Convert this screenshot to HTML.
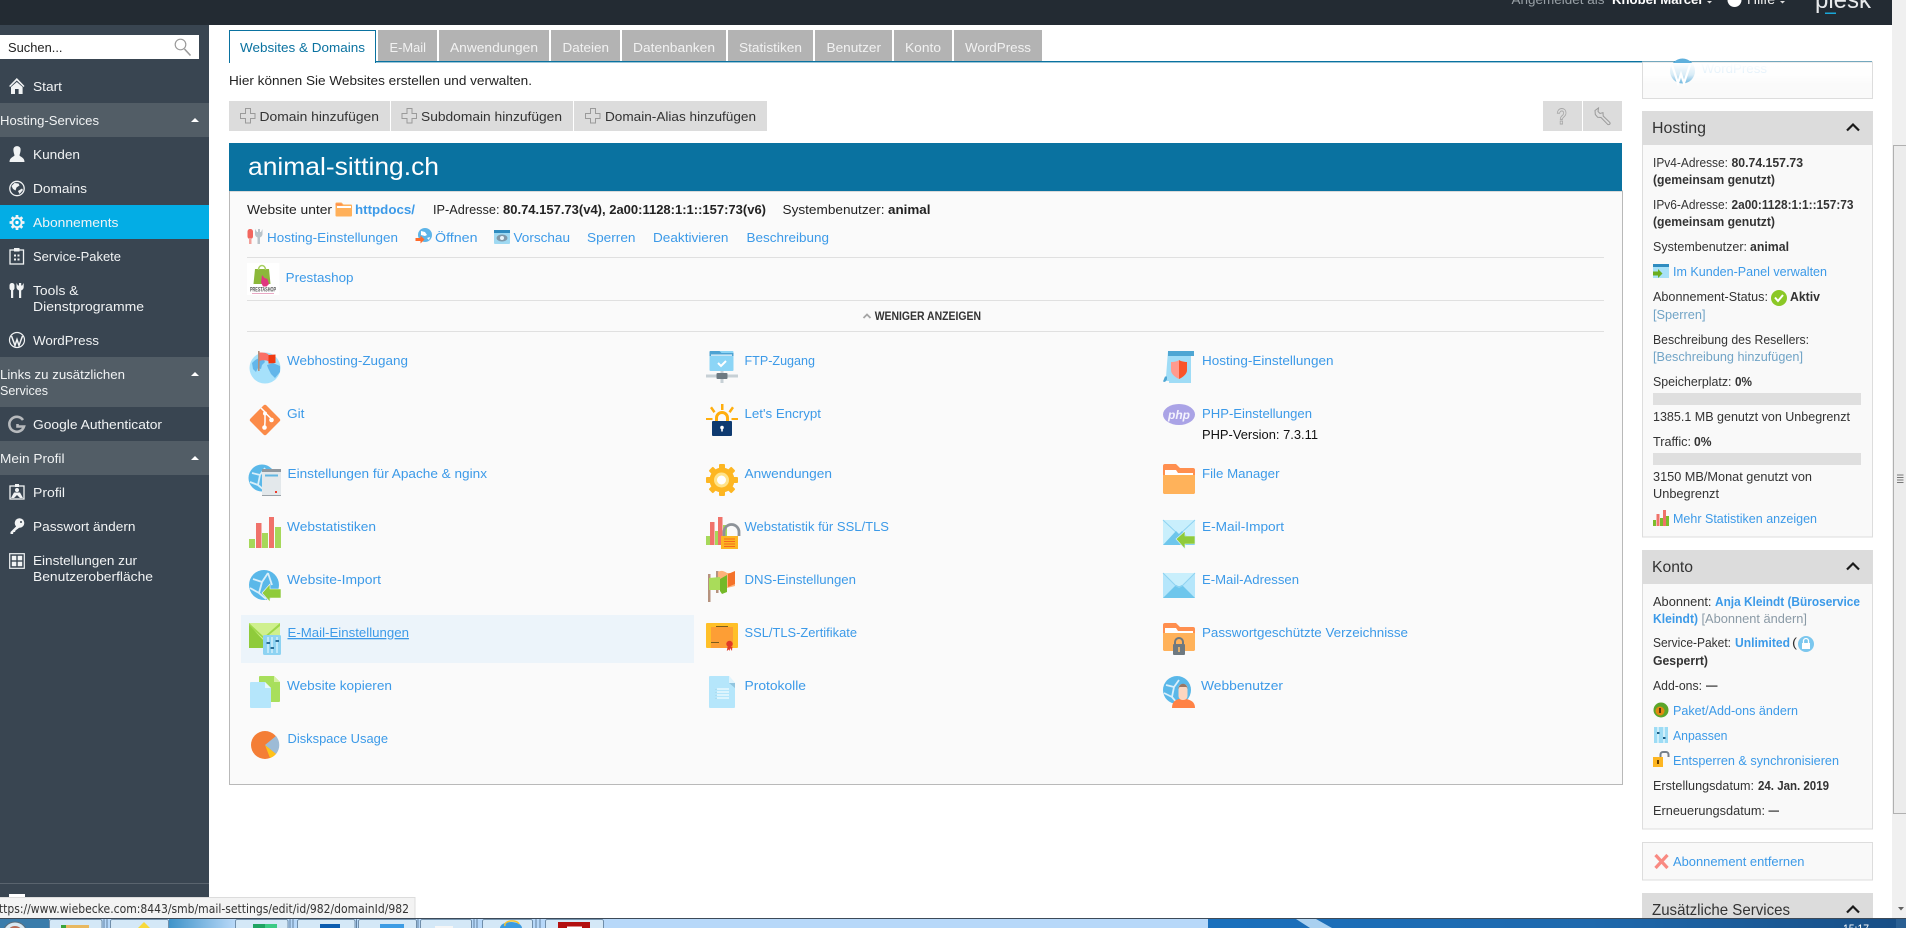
<!DOCTYPE html>
<html lang="de"><head><meta charset="utf-8"><title>Plesk - animal-sitting.ch</title>
<style>
html,body{margin:0;padding:0;width:1906px;height:928px;overflow:hidden;background:#fff}
svg{display:block;position:absolute;left:0;top:0}
text{font-family:"Liberation Sans",sans-serif;font-size:13px;fill:#222;white-space:pre}
.s text,text.s{fill:#f1f3f4}
.l text,text.l{fill:#3c9ae8}
.b{font-weight:bold}
.g{fill:#71a4c6}
.tab text{fill:#f2f2f2}
.h{font-size:16px;fill:#333}
.d{fill:#333}
</style></head><body>
<svg width="1906" height="928" viewBox="0 0 1906 928" xmlns="http://www.w3.org/2000/svg">
<defs>
<linearGradient id="fade" x1="0" y1="0" x2="0" y2="1"><stop offset="0" stop-color="#fff"/><stop offset="0.55" stop-color="#fff" stop-opacity=".75"/><stop offset="1" stop-color="#fff" stop-opacity="0"/></linearGradient>
<linearGradient id="tb" x1="0" y1="0" x2="1" y2="0"><stop offset="0" stop-color="#1a70bd"/><stop offset="0.55" stop-color="#1f69ad"/><stop offset="1" stop-color="#174d84"/></linearGradient>
<linearGradient id="tb2" x1="0" y1="0" x2="1" y2="0"><stop offset="0" stop-color="#3f93c9"/><stop offset="1" stop-color="#b9d9f8"/></linearGradient>
</defs>
<rect width="1906" height="928" fill="#fff"/>

<!-- main column -->
<g>
<rect x="229.5" y="30.5" width="146" height="32" fill="#fff" stroke="#0a72a0"/>
<rect x="376" y="61" width="1496" height="1.4" fill="#0a72a0"/>
<rect x="230" y="60" width="145" height="3" fill="#fff"/>
<rect x="378" y="30" width="59" height="31" fill="#b3b3b3"/><rect x="439" y="30" width="110" height="31" fill="#b3b3b3"/><rect x="551" y="30" width="69" height="31" fill="#b3b3b3"/><rect x="622" y="30" width="104" height="31" fill="#b3b3b3"/><rect x="728" y="30" width="85" height="31" fill="#b3b3b3"/><rect x="815" y="30" width="77" height="31" fill="#b3b3b3"/><rect x="894" y="30" width="58" height="31" fill="#b3b3b3"/><rect x="954" y="30" width="88" height="31" fill="#b3b3b3"/>
<text x="240" y="52" textLength="125" lengthAdjust="spacingAndGlyphs" fill="#0a72a0" style="fill:#0a72a0">Websites &amp; Domains</text>
<g class="tab">
<text x="389.5" y="52" textLength="36.5" lengthAdjust="spacingAndGlyphs">E-Mail</text>
<text x="450" y="52" textLength="88" lengthAdjust="spacingAndGlyphs">Anwendungen</text>
<text x="562.5" y="52" textLength="46.5" lengthAdjust="spacingAndGlyphs">Dateien</text>
<text x="633" y="52" textLength="82" lengthAdjust="spacingAndGlyphs">Datenbanken</text>
<text x="739" y="52" textLength="63" lengthAdjust="spacingAndGlyphs">Statistiken</text>
<text x="826.5" y="52" textLength="54.5" lengthAdjust="spacingAndGlyphs">Benutzer</text>
<text x="905" y="52" textLength="36" lengthAdjust="spacingAndGlyphs">Konto</text>
<text x="965" y="52" textLength="66" lengthAdjust="spacingAndGlyphs">WordPress</text>
</g>
<text x="229" y="85" textLength="303" lengthAdjust="spacingAndGlyphs">Hier können Sie Websites erstellen und verwalten.</text>

<rect x="229" y="101" width="161" height="30" fill="#dcdcdc"/><rect x="391" y="101" width="182" height="30" fill="#dcdcdc"/><rect x="574" y="101" width="193" height="30" fill="#dcdcdc"/>
<g fill="none" stroke="#9a9a9a" stroke-width="1">
<path d="M245.5 108.5h5v5h4.500v5h-4.500v4.500h-5v-4.500h-5v-5h5z"/>
<path d="M407 108.500h5v5h4.500v5h-4.500v4.500h-5v-4.500h-5v-5h5z"/>
<path d="M590.500 108.500h5v5h4.500v5h-4.500v4.500h-5v-4.500h-5v-5h5z"/>
</g>
<text x="259.500" y="121" textLength="119.500" lengthAdjust="spacingAndGlyphs" class="d">Domain hinzufügen</text>
<text x="421" y="121" textLength="141" lengthAdjust="spacingAndGlyphs" class="d">Subdomain hinzufügen</text>
<text x="605" y="121" textLength="151" lengthAdjust="spacingAndGlyphs" class="d">Domain-Alias hinzufügen</text>
<rect x="1543" y="101" width="39" height="30" fill="#dcdcdc"/><rect x="1583" y="101" width="39" height="30" fill="#dcdcdc"/>
<text x="1556.500" y="124" textLength="10.500" lengthAdjust="spacingAndGlyphs" style="font-size:22px;font-weight:bold;fill:#dcdcdc;stroke:#a5a5a5;stroke-width:.9">?</text>
<path d="M1595 110.500l3.500-2.500-.5 3.500 2 2 3-.8 .2 3.300 6.600 6.400c1 1.400 -.8 2.900 -2.200 1.900l-6.600-6.800-3.300-.2-2.400-2.800z" fill="none" stroke="#9a9a9a" stroke-width="1"/>

<rect x="229.500" y="191" width="1393" height="593.500" fill="#fafafa" stroke="#b9b9b9"/>
<rect x="229" y="143" width="1393" height="48" fill="#0a72a0"/>
<text x="248" y="175" textLength="191" lengthAdjust="spacingAndGlyphs" style="font-size:25px;fill:#fff">animal-sitting.ch</text>

<text x="247" y="214" textLength="85" lengthAdjust="spacingAndGlyphs">Website unter</text>
<path d="M335.500 203.500a1 1 0 0 1 1-1h5l2 2h7.500a1 1 0 0 1 1 1v10a1 1 0 0 1-1 1h-14.500a1 1 0 0 1-1-1z" fill="#ffb05a"/><path d="M337 206h14v2h-14z" fill="#fff"/><path d="M335.500 203.500h5.500l2 2h-7.500z" fill="#ff8f4a"/>
<text x="355" y="214" textLength="60" lengthAdjust="spacingAndGlyphs" class="l b" style="fill:#3c9ae8">httpdocs/</text>
<text x="433" y="214" textLength="66.500" lengthAdjust="spacingAndGlyphs">IP-Adresse:</text>
<text x="503" y="214" textLength="263" lengthAdjust="spacingAndGlyphs" class="b">80.74.157.73(v4), 2a00:1128:1:1::157:73(v6)</text>
<text x="782.500" y="214" textLength="102" lengthAdjust="spacingAndGlyphs">Systembenutzer:</text>
<text x="888" y="214" textLength="42.500" lengthAdjust="spacingAndGlyphs" class="b">animal</text>

<g class="l">
<text x="267" y="242" textLength="131" lengthAdjust="spacingAndGlyphs">Hosting-Einstellungen</text>
<text x="435" y="242" textLength="42.500" lengthAdjust="spacingAndGlyphs">Öffnen</text>
<text x="513.500" y="242" textLength="56.500" lengthAdjust="spacingAndGlyphs">Vorschau</text>
<text x="587" y="242" textLength="48.500" lengthAdjust="spacingAndGlyphs">Sperren</text>
<text x="653" y="242" textLength="75.500" lengthAdjust="spacingAndGlyphs">Deaktivieren</text>
<text x="746.500" y="242" textLength="82.500" lengthAdjust="spacingAndGlyphs">Beschreibung</text>
<text x="285.700" y="282" textLength="67.800" lengthAdjust="spacingAndGlyphs">Prestashop</text>
</g>
<!-- hosting tools icon -->
<rect x="247.500" y="229" width="5.500" height="10" rx="2.500" fill="#f2665e"/><rect x="249" y="238" width="2.500" height="6" fill="#f2a09a"/>
<path d="M255 229v5c0 2 1.500 3 2.500 3.500v6.500h2.500v-6.500c1-.5 2.500-1.500 2.500-3.500v-5l-1.500 3h-1v-3h-2v3h-1z" fill="#b9c3c9"/>
<!-- open icon -->
<circle cx="425" cy="235" r="7" fill="#5eb4e8"/><path d="M421 231l4 1 2 3-2 1-4-1zM427 238l3-1-1 3z" fill="#fff"/><path d="M415.500 238h5v-2.500l4 4-4 4v-2.500h-5z" fill="#ff6a2a"/>
<!-- preview icon -->
<rect x="494" y="230" width="16" height="14" rx="1" fill="#9fd9f2"/><rect x="494" y="230" width="16" height="3" fill="#2f8cc0"/><ellipse cx="502" cy="238" rx="5.500" ry="3.500" fill="#7f98a8"/><circle cx="502" cy="238" r="2" fill="#e8f4fa"/>
<line x1="247" y1="257.500" x2="1604" y2="257.500" stroke="#e0e0e0"/>
<!-- prestashop -->
<rect x="247" y="263" width="32.500" height="32" fill="#fff"/>
<path d="M255 269h14l1.500 15h-17z" fill="#8cb83a"/><path d="M258.500 270c0-6 7-6 7 0" fill="none" stroke="#a8d060" stroke-width="1.500"/><path d="M262 275l2.500 3 3 1 1.500 5-2.500 2.500h-3.500l-2-4z" fill="#e0377f"/>
<text x="250" y="291.500" textLength="26" lengthAdjust="spacingAndGlyphs" class="b" style="font-size:6px;fill:#555">PRESTASHOP</text>
<rect x="252" y="293" width="22" height="1" fill="#e9a8c4"/>
<line x1="247" y1="300.500" x2="1604" y2="300.500" stroke="#e0e0e0"/>
<path d="M863.500 318l3.500-3.500 3.500 3.500" fill="none" stroke="#a5a5a5" stroke-width="1.800"/>
<text x="874.700" y="320" textLength="106.300" lengthAdjust="spacingAndGlyphs" class="b" style="font-size:11.500px;fill:#333">WENIGER ANZEIGEN</text>
<line x1="247" y1="331.500" x2="1604" y2="331.500" stroke="#e0e0e0"/>

<rect x="241" y="615" width="453" height="48" fill="#ecf4fa"/>

<g class="l">
<text x="287" y="365" textLength="121" lengthAdjust="spacingAndGlyphs">Webhosting-Zugang</text>
<text x="287" y="418" textLength="17.500" lengthAdjust="spacingAndGlyphs">Git</text>
<text x="287.500" y="478" textLength="199.500" lengthAdjust="spacingAndGlyphs">Einstellungen für Apache &amp; nginx</text>
<text x="287" y="531" textLength="89" lengthAdjust="spacingAndGlyphs">Webstatistiken</text>
<text x="287" y="584" textLength="94" lengthAdjust="spacingAndGlyphs">Website-Import</text>
<text x="287.500" y="637" textLength="121.500" lengthAdjust="spacingAndGlyphs" text-decoration="underline">E-Mail-Einstellungen</text>
<text x="287" y="690" textLength="105" lengthAdjust="spacingAndGlyphs">Website kopieren</text>
<text x="287.500" y="743" textLength="100.500" lengthAdjust="spacingAndGlyphs">Diskspace Usage</text>

<text x="744.500" y="365" textLength="70.500" lengthAdjust="spacingAndGlyphs">FTP-Zugang</text>
<text x="744.500" y="418" textLength="76.500" lengthAdjust="spacingAndGlyphs">Let's Encrypt</text>
<text x="744.500" y="478" textLength="87.500" lengthAdjust="spacingAndGlyphs">Anwendungen</text>
<text x="744.500" y="531" textLength="144.500" lengthAdjust="spacingAndGlyphs">Webstatistik für SSL/TLS</text>
<text x="744.500" y="584" textLength="111.500" lengthAdjust="spacingAndGlyphs">DNS-Einstellungen</text>
<text x="744.500" y="637" textLength="112.500" lengthAdjust="spacingAndGlyphs">SSL/TLS-Zertifikate</text>
<text x="744.500" y="690" textLength="61.500" lengthAdjust="spacingAndGlyphs">Protokolle</text>

<text x="1202" y="365" textLength="131.500" lengthAdjust="spacingAndGlyphs">Hosting-Einstellungen</text>
<text x="1202" y="418" textLength="110" lengthAdjust="spacingAndGlyphs">PHP-Einstellungen</text>
<text x="1202" y="478" textLength="77.500" lengthAdjust="spacingAndGlyphs">File Manager</text>
<text x="1202" y="531" textLength="82" lengthAdjust="spacingAndGlyphs">E-Mail-Import</text>
<text x="1202" y="584" textLength="97" lengthAdjust="spacingAndGlyphs">E-Mail-Adressen</text>
<text x="1202" y="637" textLength="206" lengthAdjust="spacingAndGlyphs">Passwortgeschützte Verzeichnisse</text>
<text x="1201" y="690" textLength="82" lengthAdjust="spacingAndGlyphs">Webbenutzer</text>
</g>
<text x="1202" y="439" textLength="116" lengthAdjust="spacingAndGlyphs" style="fill:#111">PHP-Version: 7.3.11</text>

<!-- Webhosting-Zugang -->
<g transform="translate(249,351)">
<circle cx="16" cy="17" r="15.500" fill="#a6e1fb"/>
<path d="M3 12c3-3 7-6 11-5l2 4-3 3-1 4-3-1-2 4-3-3zM18 14l6-2 7 3 0 6-5 6-4-4-3-6z" fill="#63b6ea"/>
<rect x="9" y="0" width="1.600" height="20" fill="#b3907c"/>
<path d="M10.500 1.500c3 0 7 0 9 2v7c-2-1.500-6-1.500-9-.5z" fill="#fa6f66"/><path d="M19.500 4l7-.5v8.500l-7 .5z" fill="#f03a12"/>
</g>
<!-- Git -->
<g transform="translate(249,404)">
<rect x="4.700" y="4.700" width="22.600" height="22.600" rx="2" fill="#fb8b49" transform="rotate(45 16 16)"/>
<path d="M12 4l4 4M16 8.500v9l-.5 8M16 8.500l7 7" stroke="#fff" stroke-width="1.500" fill="none"/>
<circle cx="16" cy="9.500" r="2" fill="#fff"/><circle cx="15.500" cy="23.500" r="2.300" fill="#fff"/><circle cx="22.500" cy="16" r="2.300" fill="#fff"/>
</g>
<!-- Apache -->
<g transform="translate(249,464)">
<circle cx="13" cy="14" r="13.500" fill="#5ab8e9"/><path d="M3 9l8 2 5-7M11 11l-2 10 6 5M1 18l8 3" stroke="#d9effa" stroke-width="1.800" fill="none"/>
<rect x="13" y="5" width="19" height="27" fill="#e3e8eb"/><path d="M13 5h19v3h-19z" fill="#90989f"/><rect x="16" y="10.500" width="13" height="2" fill="#62b6e2"/><rect x="26" y="27" width="2" height="2" fill="#ee3c2b"/><rect x="13" y="31" width="19" height="1" fill="#9aa2a8"/>
</g>
<!-- Webstatistiken -->
<g transform="translate(249,517)">
<rect x="0" y="22" width="6" height="9" fill="#a6d85a"/><rect x="7" y="6" width="5.500" height="25" fill="#f0726a"/><rect x="13" y="16" width="6" height="15" fill="#a6d85a"/><rect x="20" y="0" width="5" height="31" fill="#f0726a"/><rect x="26" y="10" width="6" height="21" fill="#a6d85a"/>
</g>
<!-- Website-Import -->
<g transform="translate(249,570)">
<circle cx="15" cy="15" r="15" fill="#5ab8e9"/><path d="M4 9l9 3 6-9M13 12l-3 11 7 6M1 18l9 5M19 3l4 12" stroke="#d9effa" stroke-width="1.800" fill="none"/>
<path d="M13 23l8-9v5h11v9h-11v4z" fill="#8fcb3b" stroke="#f9f9f9" stroke-width=".6"/>
</g>
<!-- E-Mail-Einstellungen -->
<g transform="translate(249,623)">
<rect x="0" y="0" width="31" height="25" fill="#cff08e"/><path d="M0 0l15 14 16-14v3l-16 13-15-13z" fill="#9ed84a"/><path d="M0 2v23h14l3-5z" fill="#8fcb3b"/>
<rect x="14" y="12" width="18" height="20" rx="1.500" fill="#8ed3f2"/><path d="M19 14v16M23 14v16M28 14v16" stroke="#d2f0fb" stroke-width="1.500"/><rect x="17.500" y="19" width="3.500" height="2" fill="#2a6f98"/><rect x="21.500" y="24" width="3.500" height="2" fill="#2a6f98"/><rect x="26.500" y="17" width="3.500" height="2" fill="#2a6f98"/>
</g>
<!-- Website kopieren -->
<g transform="translate(250,676)">
<path d="M9 1a1 1 0 0 1 1-1h14l6 6v19a1 1 0 0 1-1 1h-20z" fill="#a8df5c"/><path d="M24 0l6 6h-6z" fill="#d7f0a8"/>
<path d="M0 7a1 1 0 0 1 1-1h14l6 6v19a1 1 0 0 1-1 1h-19a1 1 0 0 1-1-1z" fill="#b5e6fb"/><path d="M15 6l6 6h-6z" fill="#e7f7fe"/>
</g>
<!-- Diskspace -->
<g transform="translate(251,731)">
<circle cx="14" cy="14" r="14" fill="#f47e36"/><path d="M14 14l11-9a14 14 0 0 1 0 18z" fill="#9dbbd6"/><path d="M14 14l11 9a14 14 0 0 1-6 4z" fill="#ffc21a"/>
</g>

<!-- FTP -->
<g transform="translate(706,351)">
<rect x="3.500" y="0" width="24" height="20" rx="1" fill="#8cd5f6"/><path d="M3.500 1a1 1 0 0 1 1-1h9l2 2h12v3h-24z" fill="#4ea3d3"/><rect x="5" y="3.500" width="21" height="1.300" fill="#e9f7fd"/><path d="M12 12l3 3 5-5" stroke="#fff" stroke-width="2" fill="none"/>
<rect x="0" y="23.500" width="32" height="3" fill="#c7d0d5"/><rect x="14.500" y="20" width="3" height="12" fill="#c7d0d5"/><rect x="10.500" y="22" width="11" height="6" rx="1" fill="#6d7a82"/>
</g>
<!-- Let's Encrypt -->
<g transform="translate(706,404)">
<path d="M15 0h2.500v6h-2.500zM4 4l2-1.500 3.500 5-2 1.500zM28 4l-2-1.500-3.500 5 2 1.500zM0 14h6.500v2h-6.500zM25.500 14h6.500v2h-6.500z" fill="#ffae0d"/>
<path d="M9 17v-3a7 7 0 0 1 14 0v3h-3v-3a4 4 0 0 0-8 0v3z" fill="#ffae0d"/>
<rect x="6" y="17" width="20" height="15" rx="1" fill="#0e3a70"/><circle cx="16" cy="23.500" r="1.800" fill="#fff"/><rect x="15.200" y="24" width="1.600" height="3.500" fill="#fff"/>
</g>
<!-- Anwendungen gear -->
<g transform="translate(706,464)">
<g fill="#fdb622"><circle cx="16" cy="16" r="12.500"/><rect x="13" y="0" width="6" height="32" rx="1"/><rect x="13" y="0" width="6" height="32" rx="1" transform="rotate(45 16 16)"/><rect x="13" y="0" width="6" height="32" rx="1" transform="rotate(90 16 16)"/><rect x="13" y="0" width="6" height="32" rx="1" transform="rotate(135 16 16)"/></g>
<circle cx="15.500" cy="16" r="7.500" fill="#ffe38a"/><circle cx="15.500" cy="16" r="4.500" fill="#fff"/>
</g>
<!-- Webstatistik SSL -->
<g transform="translate(706,517)">
<rect x="0" y="19" width="6" height="9" fill="#a6d85a"/><rect x="4" y="5" width="4.500" height="23" fill="#f0726a"/><rect x="9" y="14" width="4" height="14" fill="#a6d85a"/><rect x="12" y="0" width="4.500" height="28" fill="#f0726a"/><rect x="17" y="8" width="4" height="20" fill="#a6d85a"/>
<path d="M18 19v-4a7.500 7.500 0 0 1 15 0v4" fill="none" stroke="#8d9399" stroke-width="2.800"/>
<rect x="15" y="19" width="17" height="13" fill="#fdb622"/><path d="M18 22h11M18 24.500h11M18 27h11M18 29.500h11" stroke="#f56a1e" stroke-width="1"/>
</g>
<!-- DNS -->
<g transform="translate(706,570)">
<rect x="2" y="4" width="2.500" height="28" fill="#b5927e"/><rect x="10" y="1" width="2.500" height="22" fill="#b5927e"/>
<path d="M12 2c3-2 6-1 9 1l8 0v13l-8 2-9-6z" fill="#ffb27a"/><path d="M22 4l7-3v13l-7 3z" fill="#f4722a"/>
<path d="M3 8l11-1 0 13-11 0z" fill="#a9dc5a"/><path d="M14 9l7-4v17l-5 2-2-3z" fill="#74b928"/>
</g>
<!-- SSL cert -->
<g transform="translate(706,623)">
<rect x="0" y="0" width="32" height="25" rx="1" fill="#ffc028"/><path d="M5 4h22v21h-22z" fill="#fd9e35"/><path d="M5 0h22v3h-22z" fill="#ffc028"/><rect x="10" y="3" width="12" height="1" fill="#7a5c1c"/><rect x="5" y="19" width="8" height="1" fill="#7a5c1c"/>
<circle cx="23.500" cy="21" r="3.200" fill="#e03a28"/><path d="M21.500 24l-.7 4 2-1.500 1 1.500.2-3 2 3 .3-4z" fill="#e03a28"/>
</g>
<!-- Protokolle -->
<g transform="translate(709,676)">
<path d="M0 1a1 1 0 0 1 1-1h19l6 7v24a1 1 0 0 1-1 1h-24a1 1 0 0 1-1-1z" fill="#b5e6fb"/><path d="M20 0l6 7h-6z" fill="#dff4fd"/><path d="M20 7h6v5z" fill="#92c5df"/>
<path d="M8 13h12M8 16h12M8 19h12M8 22h12" stroke="#e9f8fe" stroke-width="1.600"/><path d="M7 13v.1M7 16v.1M7 19v.1M7 22v.1" stroke="#5d7a8c" stroke-width="1.500"/>
</g>
<!-- Hosting-Einstellungen col 3 -->
<g transform="translate(1163,351)">
<path d="M5 0h26v4h-3v28h-22v-2h-6c1-.5 3-2 3-4z" fill="#9fdcf6"/><rect x="5" y="0" width="26" height="5" fill="#4ea6d3"/><path d="M2 31l-2-.5 2-5h2v3z" fill="#4ea6d3"/>
<path d="M8 11c4 0 7-1 8-2 1 1 5 2 8 2v8c0 4-4 7-8 9-4-2-8-5-8-9z" fill="#ff9a8e"/><path d="M16 9c1 1 5 2 8 2v8c0 4-4 7-8 9z" fill="#f9542a"/>
</g>
<!-- PHP -->
<g transform="translate(1163,404)">
<ellipse cx="16" cy="10.500" rx="16" ry="10.500" fill="#aaa3e6"/>
<text x="5" y="15" textLength="22" lengthAdjust="spacingAndGlyphs" style="font-size:12px;font-weight:bold;font-style:italic;fill:#f4f3fd">php</text>
</g>
<!-- File manager -->
<g transform="translate(1163,464)">
<path d="M0 2a2 2 0 0 1 2-2h11l4 4h13a2 2 0 0 1 2 2v22a2 2 0 0 1-2 2h-28a2 2 0 0 1-2-2z" fill="#ff8f4f"/><path d="M0 11h32v17a2 2 0 0 1-2 2h-28a2 2 0 0 1-2-2z" fill="#ffb25a"/><path d="M2 6h11l2 3h15v2h-28z" fill="#fff"/>
</g>
<!-- E-Mail import -->
<g transform="translate(1163,517)">
<rect x="0" y="3" width="32" height="25" fill="#c9effc"/><path d="M0 3l16 15 16-15" fill="none" stroke="#8ed3f2" stroke-width="1"/><path d="M0 28l13-14 3 3 3-3 13 14z" fill="#6ec6ec"/>
<path d="M13 22l9-8v5h10v8h-10v5z" fill="#8fcb3b" stroke="#dff4fd" stroke-width=".6"/>
</g>
<!-- E-Mail addresses -->
<g transform="translate(1163,570)">
<rect x="0" y="3" width="32" height="25" fill="#c9effc"/><path d="M0 3l13 13h6l13-13v25h-32z" fill="#b5e6fb"/><path d="M0 28l13-13 3 1.500 3-1.500 13 13z" fill="#6ec6ec"/><path d="M0 3l13 13 3 1.500 3-1.500 13-13" fill="none" stroke="#8ed3f2"/>
</g>
<!-- Protected dirs -->
<g transform="translate(1163,623)">
<path d="M0 2a2 2 0 0 1 2-2h11l4 4h13a2 2 0 0 1 2 2v20a2 2 0 0 1-2 2h-28a2 2 0 0 1-2-2z" fill="#ff8f4f"/><path d="M0 10h32v16a2 2 0 0 1-2 2h-28a2 2 0 0 1-2-2z" fill="#ffb25a"/><path d="M2 5h11l2 3h15v2h-28z" fill="#fff"/>
<path d="M12 22v-3a4 4 0 0 1 8 0v3" fill="none" stroke="#6e7980" stroke-width="2"/><rect x="10" y="21" width="12" height="11" rx="1" fill="#6e7980"/><rect x="15" y="24" width="2" height="5" fill="#ddb070"/>
</g>
<!-- Webbenutzer -->
<g transform="translate(1163,676)">
<circle cx="14" cy="14" r="14" fill="#5ab8e9"/><path d="M3 9l8 2 5-7M11 11l-2 10 5 6M1 17l8 4" stroke="#d9effa" stroke-width="1.800" fill="none"/>
<path d="M9 32c0-6 3-8 7-9h7c5 1 9 3 9 9z" fill="#ff8245"/>
<rect x="15.500" y="8" width="9" height="16" rx="4" fill="#fcd6c0"/><path d="M15.500 13c0-7 9-7 9 0l-1-2h-7z" fill="#9a7663"/>
</g>

<!-- right column -->
<rect x="1642.500" y="62" width="230" height="36.500" fill="#fafafa" stroke="#ddd"/>
<g transform="translate(1670,63)"><circle cx="12.500" cy="8" r="12.500" fill="#5fb0dc"/><path d="M2 2l6 18 3-9 3 9 6-18" fill="none" stroke="#fff" stroke-width="2.200"/></g>
<text x="1701.500" y="73" textLength="65.500" lengthAdjust="spacingAndGlyphs" style="fill:#7cbce8">WordPress</text>
<rect x="1643" y="63" width="229" height="22" fill="url(#fade)"/>

<rect x="1642.500" y="111.500" width="230" height="425.500" fill="#f9f9f9" stroke="#ddd"/>
<rect x="1642" y="111" width="231" height="34" fill="#dcdcdc"/>
<text x="1652" y="133" textLength="54" lengthAdjust="spacingAndGlyphs" class="h">Hosting</text>
<path d="M1847 130.500l6-6 6 6" fill="none" stroke="#1a1a1a" stroke-width="2.200"/>
<g class="d">
<text x="1653" y="167" textLength="75" lengthAdjust="spacingAndGlyphs" class="d">IPv4-Adresse:</text><text x="1731.500" y="167" textLength="71.500" lengthAdjust="spacingAndGlyphs" class="d b">80.74.157.73</text>
<text x="1653" y="184" textLength="122" lengthAdjust="spacingAndGlyphs" class="d b">(gemeinsam genutzt)</text>
<text x="1653" y="209" textLength="75" lengthAdjust="spacingAndGlyphs" class="d">IPv6-Adresse:</text><text x="1731.500" y="209" textLength="122" lengthAdjust="spacingAndGlyphs" class="d b">2a00:1128:1:1::157:73</text>
<text x="1653" y="226" textLength="122" lengthAdjust="spacingAndGlyphs" class="d b">(gemeinsam genutzt)</text>
<text x="1653" y="251" textLength="94" lengthAdjust="spacingAndGlyphs" class="d">Systembenutzer:</text><text x="1750" y="251" textLength="39" lengthAdjust="spacingAndGlyphs" class="d b">animal</text>
<text x="1653" y="301" textLength="115" lengthAdjust="spacingAndGlyphs" class="d">Abonnement-Status:</text><text x="1790" y="301" textLength="30" lengthAdjust="spacingAndGlyphs" class="d b">Aktiv</text>
<text x="1653" y="344" textLength="156" lengthAdjust="spacingAndGlyphs" class="d">Beschreibung des Resellers:</text>
<text x="1653" y="386" textLength="78.500" lengthAdjust="spacingAndGlyphs" class="d">Speicherplatz:</text><text x="1735" y="386" textLength="17" lengthAdjust="spacingAndGlyphs" class="d b">0%</text>
<text x="1653" y="421" textLength="197" lengthAdjust="spacingAndGlyphs" class="d">1385.1 MB genutzt von Unbegrenzt</text>
<text x="1653" y="446" textLength="38" lengthAdjust="spacingAndGlyphs" class="d">Traffic:</text><text x="1694" y="446" textLength="17.500" lengthAdjust="spacingAndGlyphs" class="d b">0%</text>
<text x="1653" y="481" textLength="159" lengthAdjust="spacingAndGlyphs" class="d">3150 MB/Monat genutzt von</text>
<text x="1653" y="498" textLength="66" lengthAdjust="spacingAndGlyphs" class="d">Unbegrenzt</text>
</g>
<text x="1653" y="319" textLength="52.500" lengthAdjust="spacingAndGlyphs" class="g">[Sperren]</text>
<text x="1653" y="361" textLength="150" lengthAdjust="spacingAndGlyphs" class="g">[Beschreibung hinzufügen]</text>
<rect x="1653" y="393" width="208" height="12" fill="#dfdfdf"/><rect x="1653" y="453" width="208" height="12" fill="#dfdfdf"/>
<g class="l">
<text x="1673" y="276" textLength="154" lengthAdjust="spacingAndGlyphs">Im Kunden-Panel verwalten</text>
<text x="1673" y="523" textLength="144" lengthAdjust="spacingAndGlyphs">Mehr Statistiken anzeigen</text>
</g>
<rect x="1653" y="264" width="16" height="14" fill="#a8e1f8"/><rect x="1653" y="264" width="16" height="3" fill="#2f8cc0"/><path d="M1653 271.500h5v-2.500l4.500 4.500-4.500 4.500v-2.500h-5z" fill="#6cae20"/>
<circle cx="1779" cy="298" r="8" fill="#8bc826"/><path d="M1775 297.500l3 3.500 5-6" fill="none" stroke="#fff" stroke-width="2"/>
<g><rect x="1653" y="520" width="3" height="6" fill="#7cbd2a"/><rect x="1656.500" y="514" width="3" height="12" fill="#f0726a"/><rect x="1660" y="518" width="3" height="8" fill="#7cbd2a"/><rect x="1663" y="510" width="3" height="16" fill="#f0726a"/><rect x="1666" y="516" width="3" height="10" fill="#7cbd2a"/></g>

<rect x="1642.500" y="550.500" width="230" height="278.500" fill="#f9f9f9" stroke="#ddd"/>
<rect x="1642" y="550" width="231" height="34" fill="#dcdcdc"/>
<text x="1652" y="572" textLength="41" lengthAdjust="spacingAndGlyphs" class="h">Konto</text>
<path d="M1847 569.500l6-6 6 6" fill="none" stroke="#1a1a1a" stroke-width="2.200"/>
<text x="1653" y="606" textLength="58.500" lengthAdjust="spacingAndGlyphs" class="d">Abonnent:</text>
<text x="1715" y="606" textLength="145" lengthAdjust="spacingAndGlyphs" class="b" style="fill:#3c9ae8">Anja Kleindt (Büroservice</text>
<text x="1653" y="623" textLength="45" lengthAdjust="spacingAndGlyphs" class="b" style="fill:#3c9ae8">Kleindt)</text>
<text x="1701.500" y="623" textLength="105.500" lengthAdjust="spacingAndGlyphs" style="fill:#8a9aa6">[Abonnent ändern]</text>
<text x="1653" y="647" textLength="78" lengthAdjust="spacingAndGlyphs" class="d">Service-Paket:</text>
<text x="1735" y="647" textLength="55" lengthAdjust="spacingAndGlyphs" class="b" style="fill:#3c9ae8">Unlimited</text>
<text x="1792" y="647" textLength="5" lengthAdjust="spacingAndGlyphs" class="d">(</text>
<circle cx="1806" cy="644" r="8" fill="#7cc7ee"/><rect x="1802" y="643" width="8" height="6" fill="#fff"/><path d="M1803.500 643v-2a2.500 2.500 0 0 1 5 0v2" fill="none" stroke="#fff" stroke-width="1.300"/>
<text x="1653" y="665" textLength="55" lengthAdjust="spacingAndGlyphs" class="d b">Gesperrt)</text>
<text x="1653" y="690" textLength="49" lengthAdjust="spacingAndGlyphs" class="d">Add-ons:</text><rect x="1706" y="685.500" width="11.500" height="1.200" fill="#333"/>
<g class="l">
<text x="1673" y="715" textLength="125" lengthAdjust="spacingAndGlyphs">Paket/Add-ons ändern</text>
<text x="1673" y="740" textLength="54.500" lengthAdjust="spacingAndGlyphs">Anpassen</text>
<text x="1673" y="765" textLength="166" lengthAdjust="spacingAndGlyphs">Entsperren &amp; synchronisieren</text>
</g>
<circle cx="1661" cy="710" r="7.500" fill="#5ba62a"/><circle cx="1660" cy="711" r="4.500" fill="#e28a10"/><rect x="1659" y="708" width="2" height="5" fill="#5a3a10"/>
<rect x="1654" y="727" width="14" height="16" fill="#9ddcf5"/><path d="M1658 727v16M1664 727v16" stroke="#e6f7fd" stroke-width="1.400"/><rect x="1657" y="732" width="2.500" height="2" fill="#1a5f88"/><rect x="1663" y="737" width="2.500" height="2" fill="#1a5f88"/>
<rect x="1653" y="757" width="10" height="10" fill="#fdb622"/><rect x="1657" y="760" width="2" height="4" fill="#6a3f00"/><path d="M1660.500 757v-2.500a2.500 2.500 0 0 1 2.500-2.500h3a2.500 2.500 0 0 1 2.500 2.500v2.500" fill="none" stroke="#76808a" stroke-width="2"/>
<text x="1653" y="790" textLength="101" lengthAdjust="spacingAndGlyphs" class="d">Erstellungsdatum:</text><text x="1758" y="790" textLength="71" lengthAdjust="spacingAndGlyphs" class="d b">24. Jan. 2019</text>
<text x="1653" y="815" textLength="112" lengthAdjust="spacingAndGlyphs" class="d">Erneuerungsdatum:</text><rect x="1768.500" y="810.500" width="10.500" height="1.200" fill="#333"/>

<rect x="1642.500" y="842.500" width="230" height="37.500" fill="#f9f9f9" stroke="#ddd"/>
<path d="M1655.500 855l12 13M1667.500 855l-12 13" stroke="#f98a82" stroke-width="3.200"/>
<text x="1673" y="866" textLength="131.500" lengthAdjust="spacingAndGlyphs" style="fill:#3c9ae8">Abonnement entfernen</text>
<rect x="1642" y="893" width="231" height="26" fill="#dcdcdc"/>
<text x="1652" y="915" textLength="138" lengthAdjust="spacingAndGlyphs" class="h">Zusätzliche Services</text>
<path d="M1847 912.500l6-6 6 6" fill="none" stroke="#1a1a1a" stroke-width="2.200"/>
</g>

<!-- header -->
<rect x="0" y="0" width="1892" height="25" fill="#232b33"/>
<text x="1511.500" y="4" textLength="93" lengthAdjust="spacingAndGlyphs" style="fill:#98a0a6">Angemeldet als</text>
<text x="1612" y="4" textLength="90" lengthAdjust="spacingAndGlyphs" class="b" style="fill:#fff">Knobel Marcel</text>
<path d="M1707 1l2.500 2.500 2.500-2.500z" fill="#ddd"/>
<circle cx="1734.500" cy="0" r="7" fill="#fff"/>
<text x="1747" y="4" textLength="28" lengthAdjust="spacingAndGlyphs" style="fill:#f0f0f0">Hilfe</text>
<path d="M1780 1l2.500 2.500 2.500-2.500z" fill="#ddd"/>
<text x="1815" y="8" textLength="56" lengthAdjust="spacingAndGlyphs" style="font-size:25px;fill:#e8eaec">plesk</text>
<rect x="1825" y="12.500" width="11" height="1.500" fill="#19a7d8"/>

<!-- sidebar -->
<rect x="0" y="25" width="209" height="893" fill="#394551"/>
<rect x="0" y="35" width="199" height="24" fill="#fff"/>
<text x="8" y="52" textLength="54.500" lengthAdjust="spacingAndGlyphs" style="fill:#222">Suchen...</text>
<circle cx="180.500" cy="44.500" r="5.300" fill="none" stroke="#9a9a9a" stroke-width="1.200"/><path d="M184.500 49l6 6.500" stroke="#9a9a9a" stroke-width="1.600"/>
<rect x="0" y="103" width="209" height="34" fill="#525d66"/>
<rect x="0" y="205" width="209" height="34" fill="#03ade5"/>
<rect x="0" y="357" width="209" height="50" fill="#525d66"/>
<rect x="0" y="441" width="209" height="34" fill="#525d66"/>
<g class="s">
<text x="33" y="91" textLength="29" lengthAdjust="spacingAndGlyphs">Start</text>
<text x="0" y="125" textLength="99" lengthAdjust="spacingAndGlyphs">Hosting-Services</text>
<text x="33" y="159" textLength="47" lengthAdjust="spacingAndGlyphs">Kunden</text>
<text x="33" y="193" textLength="54" lengthAdjust="spacingAndGlyphs">Domains</text>
<text x="33" y="227" textLength="85.500" lengthAdjust="spacingAndGlyphs">Abonnements</text>
<text x="33" y="261" textLength="88" lengthAdjust="spacingAndGlyphs">Service-Pakete</text>
<text x="33" y="295" textLength="45.500" lengthAdjust="spacingAndGlyphs">Tools &amp;</text>
<text x="33" y="311" textLength="111" lengthAdjust="spacingAndGlyphs">Dienstprogramme</text>
<text x="33" y="345" textLength="66" lengthAdjust="spacingAndGlyphs">WordPress</text>
<text x="0" y="379" textLength="125" lengthAdjust="spacingAndGlyphs">Links zu zusätzlichen</text>
<text x="0" y="395" textLength="48" lengthAdjust="spacingAndGlyphs">Services</text>
<text x="33" y="429" textLength="129" lengthAdjust="spacingAndGlyphs">Google Authenticator</text>
<text x="0" y="463" textLength="64.500" lengthAdjust="spacingAndGlyphs">Mein Profil</text>
<text x="33" y="497" textLength="32" lengthAdjust="spacingAndGlyphs">Profil</text>
<text x="33" y="531" textLength="102.500" lengthAdjust="spacingAndGlyphs">Passwort ändern</text>
<text x="33" y="565" textLength="104" lengthAdjust="spacingAndGlyphs">Einstellungen zur</text>
<text x="33" y="581" textLength="120" lengthAdjust="spacingAndGlyphs">Benutzeroberfläche</text>
</g>
<path d="M191 122l4-4 4 4z" fill="#fff"/><path d="M191 376l4-4 4 4z" fill="#fff"/><path d="M191 460l4-4 4 4z" fill="#fff"/>
<g fill="#f1f3f4">
<!-- home -->
<path d="M16.800 78l7.700 8-1 1-6.700-6.500-6.700 6.500-1-1zM11 87l5.800-5 5.800 5v7h-4v-5h-3.600v5h-4z"/>
<!-- person -->
<path d="M13.500 148.500a3.800 3.800 0 0 1 7 0c.5 3-1 6-1 7 1 1.500 5 2 5 6.500h-15c0-4.500 4-5 5-6.500 0-1-1.500-4-1-7z"/>
<!-- gear -->
<circle cx="17" cy="222.500" r="5.600"/>
<rect x="15.600" y="215" width="2.800" height="15" rx=".5"/>
<rect x="15.600" y="215" width="2.800" height="15" rx=".5" transform="rotate(45 17 222.500)"/>
<rect x="15.600" y="215" width="2.800" height="15" rx=".5" transform="rotate(90 17 222.500)"/>
<rect x="15.600" y="215" width="2.800" height="15" rx=".5" transform="rotate(135 17 222.500)"/>
</g>
<circle cx="17" cy="222.500" r="3.700" fill="#03ade5"/><circle cx="17" cy="222.500" r="1.700" fill="#fff"/>
<!-- globe -->
<circle cx="17" cy="188.500" r="7.200" fill="none" stroke="#f1f3f4" stroke-width="1.300"/><path d="M11.500 186l3-3 4 .5 1 2-3 2-1 3-2.500-1.500zM18 191l4-2.500 1 1.500-3.500 4z" fill="#f1f3f4"/>
<!-- clipboard -->
<rect x="10" y="250" width="13.500" height="14" fill="none" stroke="#f1f3f4" stroke-width="1.300"/><rect x="14" y="248" width="5.500" height="3.500" fill="#f1f3f4"/><path d="M14 254.500h2v2h-2zM17.500 254.500h2v2h-2zM14 258.500h2v2h-2zM17.500 258.500h2v2h-2z" fill="#f1f3f4"/>
<!-- tools -->
<rect x="9.500" y="283" width="5" height="7.500" rx="2.400" fill="#f1f3f4"/><rect x="11" y="289" width="2.200" height="9" fill="#f1f3f4"/><path d="M16.500 283v4c0 2 1.500 3 2.500 3.500v7.500h2.200v-7.500c1-.5 2.500-1.500 2.500-3.500v-4l-1.500 2.500h-1v-2.500h-2.200v2.500h-1z" fill="#f1f3f4"/>
<!-- wp -->
<circle cx="17" cy="340" r="7.500" fill="none" stroke="#f1f3f4" stroke-width="1.200"/><path d="M11.500 336l3.500 9.500 2-6 2 6 3.500-9.500" fill="none" stroke="#f1f3f4" stroke-width="1.500"/>
<!-- google -->
<path d="M23 420a7.500 7.500 0 1 0 1 6.500h-6.500v-2.500" fill="none" stroke="#b7babd" stroke-width="2.600"/>
<!-- profile -->
<rect x="10" y="486" width="14" height="13" fill="none" stroke="#f1f3f4" stroke-width="1.300"/><rect x="15" y="484" width="4" height="3" fill="#f1f3f4"/><circle cx="17" cy="490" r="2" fill="#f1f3f4"/><path d="M11 498l3-5.500h6l3 5.500h-3l-3-3-3 3z" fill="#f1f3f4"/>
<!-- key -->
<circle cx="19.500" cy="523" r="4.800" fill="#f1f3f4"/><path d="M16.500 526l-6 6 0 2h2.500l.5-2h1.500l.5-1.500 4-3z" fill="#f1f3f4"/><circle cx="21" cy="522" r="1" fill="#394551"/>
<!-- grid -->
<rect x="9.700" y="553.700" width="14.600" height="14.600" fill="none" stroke="#f1f3f4" stroke-width="1.200"/><rect x="11.800" y="555.800" width="4.500" height="4.500" fill="#f1f3f4"/><rect x="17.700" y="555.800" width="4.500" height="4.500" fill="#f1f3f4"/><rect x="11.800" y="561.700" width="4.500" height="4.500" fill="#f1f3f4"/><rect x="17.700" y="561.700" width="4.500" height="4.500" fill="#f1f3f4"/>
<rect x="0" y="883" width="209" height="1" fill="#5a646e"/>
<rect x="9" y="894" width="16" height="4" fill="#fff"/>

<!-- scrollbar -->
<rect x="1892" y="0" width="14" height="918" fill="#f0f0f0"/>
<rect x="1893.500" y="145.500" width="13" height="668" fill="#ececec" stroke="#b0b0b0"/>
<path d="M1897 475h6.500M1897 477.500h6.500M1897 480h6.500M1897 482.500h6.500" stroke="#777" stroke-width="1"/>
<path d="M1898 907h6l-3 3.500z" fill="#606060"/>

<!-- status tooltip -->
<rect x="-2" y="897.500" width="417" height="21" fill="#f3f3f3" stroke="#dcdcdc"/>
<text x="-8" y="913" textLength="417" lengthAdjust="spacingAndGlyphs" style="font-family:'DejaVu Sans',sans-serif;font-size:12px;fill:#333">https://www.wiebecke.com:8443/smb/mail-settings/edit/id/982/domainId/982</text>

<!-- taskbar -->
<rect x="0" y="918" width="1906" height="10" fill="#b7d8f9"/>
<rect x="1208" y="919" width="698" height="9" fill="url(#tb)"/>
<path d="M1296 919h20l16 9h-22z" fill="#a9d0f0"/>
<rect x="1896" y="919" width="10" height="9" fill="#2a5f93"/>
<rect x="0" y="919" width="49" height="9" fill="#3a7cab"/>
<circle cx="15" cy="934" r="12" fill="#d8e8f2" stroke="#5c6d7a"/><circle cx="15" cy="934" r="8" fill="#b76a55"/>
<g fill="#d4e8f7" stroke="#5a7a96" stroke-width=".8">
<rect x="49.500" y="919.500" width="52.500" height="10" rx="2"/><rect x="110.500" y="919.500" width="58" height="10" rx="2"/><rect x="235.500" y="919.500" width="52.500" height="10" rx="2"/><rect x="297.500" y="919.500" width="57.500" height="10" rx="2"/><rect x="358.500" y="919.500" width="58" height="10" rx="2"/><rect x="420.500" y="919.500" width="51" height="10" rx="2"/><rect x="482.500" y="919.500" width="50" height="10" rx="2"/><rect x="545.500" y="919.500" width="58" height="10" rx="2"/>
</g>
<rect x="169" y="919" width="66" height="9" fill="url(#tb2)"/>
<path d="M104 919v9M107 919v9M290 919v9M293 919v9M356.500 919v9M418 919v9M474 919v9M477 919v9M536 919v9M540 919v9" stroke="#4a6c8a" stroke-width=".8"/>
<rect x="61" y="925" width="28" height="3" fill="#e8b860"/><rect x="61" y="925" width="5" height="3" fill="#3aa33a"/>
<path d="M144 922l6 6h-12z" fill="#f8d93a"/>
<rect x="253" y="924" width="12" height="4" fill="#1fa463"/><rect x="265" y="924" width="12" height="4" fill="#3ccb85"/>
<rect x="320" y="924" width="20" height="4" fill="#0a5cb0"/>
<rect x="380" y="924" width="24" height="4" fill="#3d9ce4"/>
<rect x="435" y="926" width="18" height="2" fill="#f6f6f6"/>
<path d="M500 928a11 6 0 0 1 22 0z" fill="#3b9be0"/><path d="M505 926a7 4 0 0 1 14-2" fill="none" stroke="#f4c430" stroke-width="1.500"/>
<rect x="558" y="922" width="32" height="6" fill="#b31010"/><rect x="567" y="926.500" width="15" height="1.500" fill="#fff"/>
<rect x="0" y="918" width="1906" height="1" fill="#3d4a58"/>
<text x="1843" y="933" textLength="26" lengthAdjust="spacingAndGlyphs" style="font-size:12px;fill:#fff">15:17</text>
</svg>
</body></html>
